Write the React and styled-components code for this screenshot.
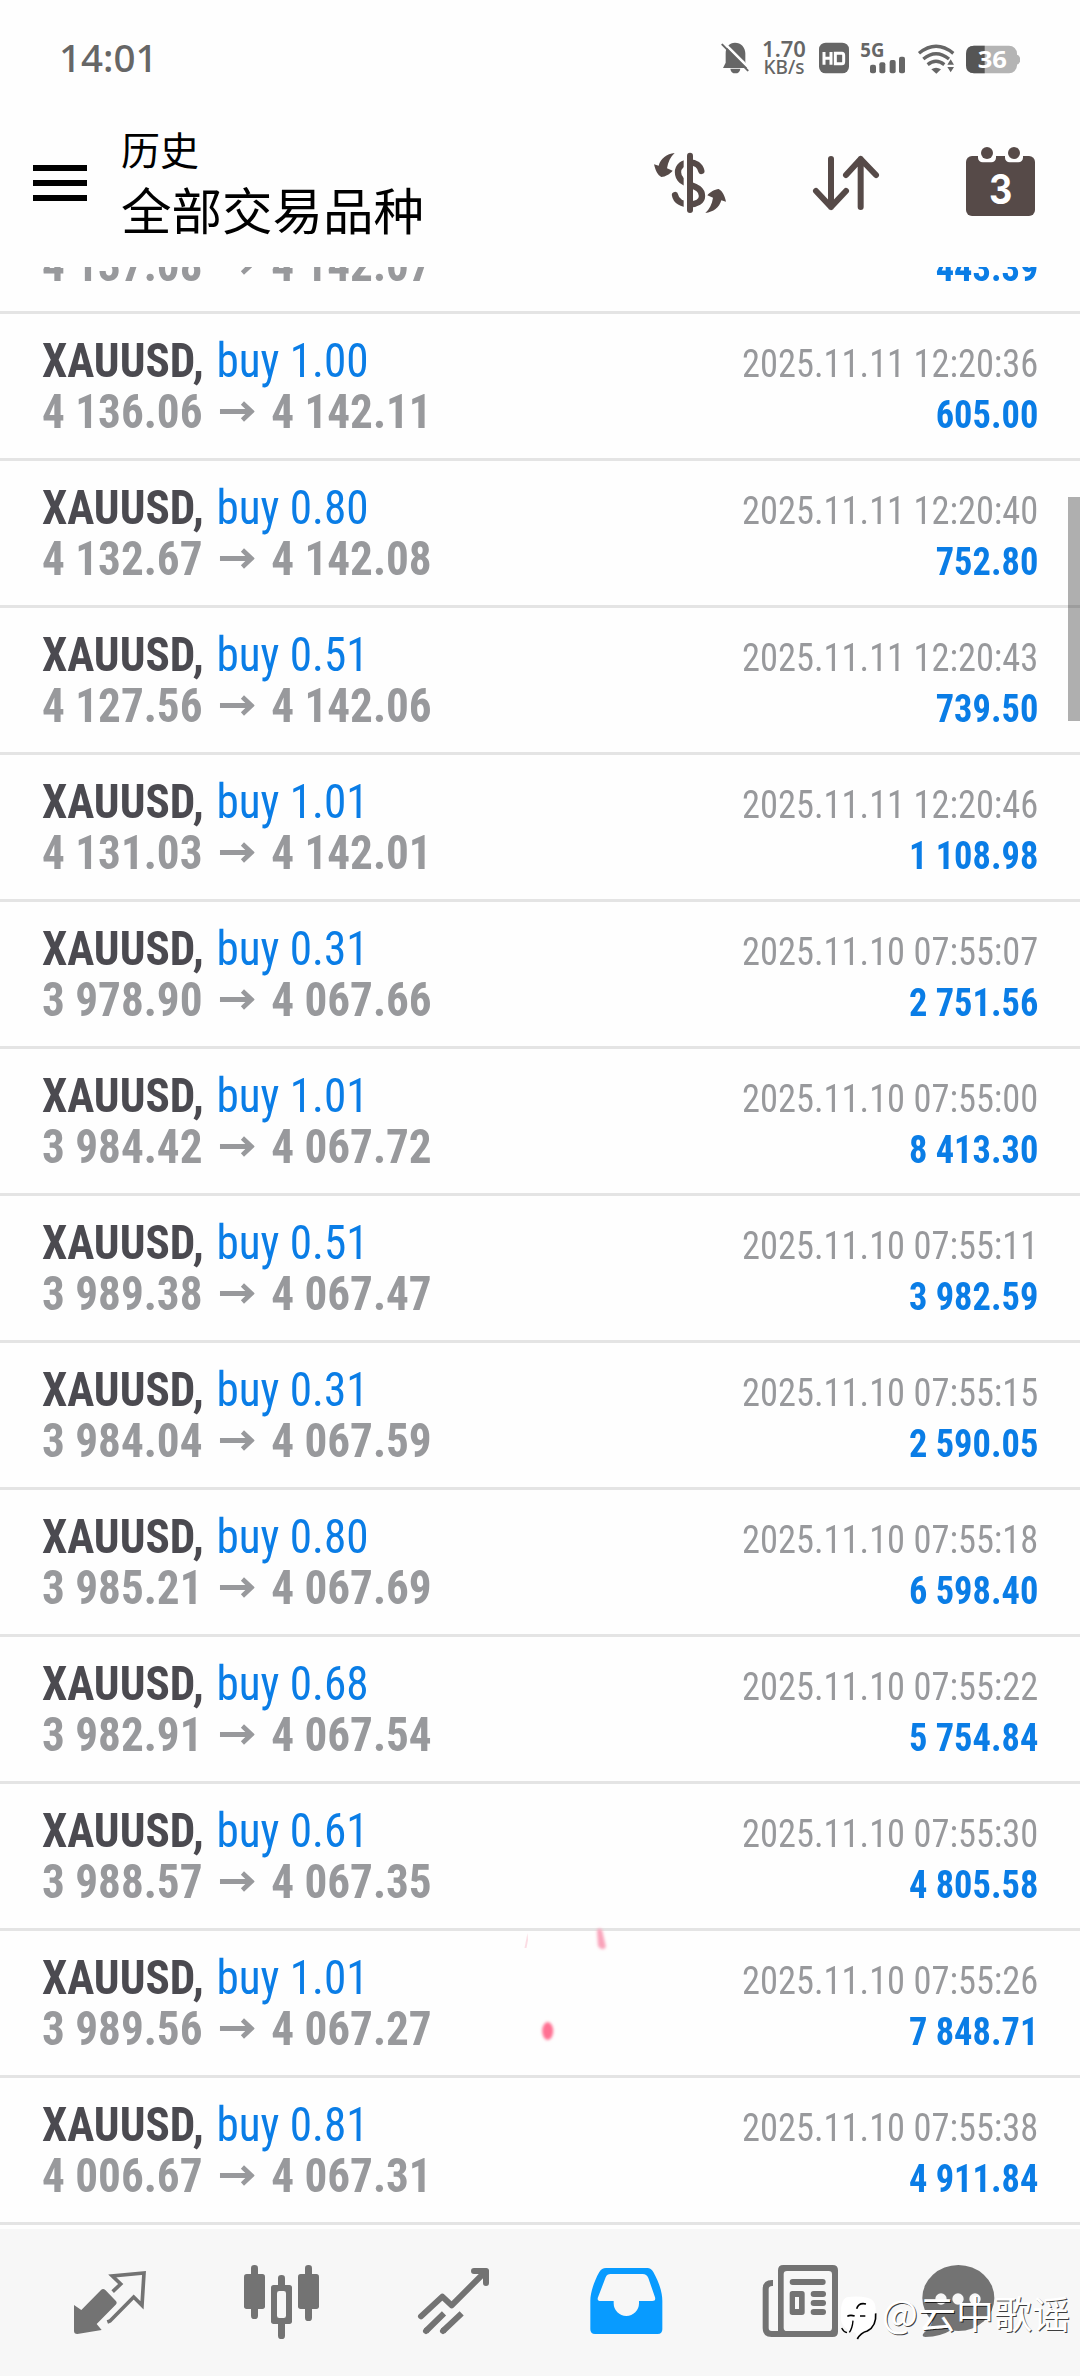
import React from 'react'
import styled, { createGlobalStyle } from 'styled-components'

const GlobalStyle = createGlobalStyle`
  * {
    box-sizing: border-box;
  }
  body {
    margin: 0;
    background: #fefefe;
  }
`

const Screen = styled.div`
  position: relative;
  display: flex;
  flex-direction: column;
  width: 1080px;
  height: 2376px;
  overflow: hidden;
  background: #fefefe;
  font-family: 'Roboto Condensed', Roboto, 'Liberation Sans', sans-serif;
  font-stretch: 75%;
`

const StatusBar = styled.div`
  display: flex;
  align-items: center;
  justify-content: space-between;
  height: 116px;
  padding: 0 60px 0 59px;
  font-family: 'Noto Sans', sans-serif;
  font-stretch: normal;
  color: #666;
`

const Clock = styled.div`
  padding-bottom: 3px;
  font-size: 38.5px;
  font-weight: 500;
`

const StatusIcons = styled.div`
  display: flex;
  align-items: center;
`

const Speed = styled.div`
  width: 46px;
  margin: 0 12px 0 12px;
  font-size: 22px;
  font-weight: 600;
  line-height: 19px;
  text-align: center;
  white-space: nowrap;
`

const SpeedUnit = styled.div`
  font-size: 19px;
  font-weight: 500;
`

const Toolbar = styled.header`
  display: flex;
  align-items: flex-start;
  height: 151px;
  padding: 0 42px 0 33px;
`

const MenuButton = styled.button`
  display: flex;
  flex-direction: column;
  gap: 9px;
  width: 54px;
  margin: 49px 34px 0 0;
  padding: 0;
  border: 0;
  background: none;
`

const MenuLine = styled.span`
  height: 6px;
  background: #000;
`

const Titles = styled.div`
  flex: 1;
  padding-top: 4px;
  font-family: 'Noto Sans CJK SC', sans-serif;
  font-stretch: normal;
  color: #000;
`

const Title = styled.div`
  font-size: 39px;
  line-height: 56px;
`

const Subtitle = styled.div`
  font-size: 50.5px;
  line-height: 64px;
`

const Actions = styled.div`
  display: flex;
  gap: 84px;
  padding-top: 31px;
`

const ActionIcon = styled.svg`
  display: block;
  width: 72px;
  height: 72px;
`

const List = styled.main`
  flex: none;
  height: 1962px;
  overflow: hidden;
`

const Deals = styled.div`
  margin-top: -100px;
`

const Deal = styled.div`
  display: flex;
  justify-content: space-between;
  height: 147px;
  padding: 21px 42px 0;
  border-bottom: 3px solid #e4e4e4;
  white-space: nowrap;
`

const Position = styled.div`
  transform: scaleX(0.941);
  transform-origin: left;
`

const Result = styled.div`
  padding-top: 3px;
  transform: scaleX(0.922);
  transform-origin: right;
`

const Line = styled.div`
  display: flex;
  align-items: center;
  justify-content: ${props => (props.$end ? 'flex-end' : 'flex-start')};
  height: 51px;
`

const Symbol = styled.span`
  margin-right: 13.5px;
  font-size: 48px;
  font-weight: 700;
  color: #4b4a50;
`

const Volume = styled.span`
  font-size: 48px;
  color: #0a7de6;
`

const Price = styled.span`
  font-size: 48px;
  font-weight: 700;
  color: #98999c;
`

const Arrow = styled.svg`
  width: 37px;
  height: 21px;
  margin: 0 18px;
`

const Time = styled.span`
  font-size: 39.5px;
  color: #98999c;
`

const Profit = styled.span`
  font-size: 39.5px;
  font-weight: 700;
  color: #0a7de6;
`

const Nav = styled.nav`
  display: grid;
  grid-template-columns: repeat(6, 172px);
  justify-items: center;
  flex: 1;
  padding: 23px 24px 0;
  background: #f7f7f7;
`

const NavIcon = styled.svg`
  display: block;
  width: 96px;
  height: 96px;
`

const ScrollThumb = styled.div`
  position: absolute;
  top: 497px;
  right: 0;
  width: 12px;
  height: 224px;
  background: rgba(0, 0, 0, 0.31);
`

const Sparks = styled.svg`
  position: absolute;
  top: 1920px;
  left: 510px;
  width: 110px;
  height: 130px;
`

const Watermark = styled.div`
  position: absolute;
  top: 2292px;
  left: 838px;
  display: flex;
  align-items: flex-start;
  font-family: 'Noto Sans CJK SC', sans-serif;
  font-size: 38px;
  line-height: 39px;
  color: #fff;
  text-shadow: 1px 1px 0 rgba(0, 0, 0, 0.75);
  white-space: nowrap;
`

const WatermarkLogo = styled.svg`
  width: 42px;
  height: 48px;
  margin-right: 2px;
`

const deals = [
  { volume: '1.01', open: '4 137.08', close: '4 142.07', time: '2025.11.11 12:20:33', profit: '443.39' },
  { volume: '1.00', open: '4 136.06', close: '4 142.11', time: '2025.11.11 12:20:36', profit: '605.00' },
  { volume: '0.80', open: '4 132.67', close: '4 142.08', time: '2025.11.11 12:20:40', profit: '752.80' },
  { volume: '0.51', open: '4 127.56', close: '4 142.06', time: '2025.11.11 12:20:43', profit: '739.50' },
  { volume: '1.01', open: '4 131.03', close: '4 142.01', time: '2025.11.11 12:20:46', profit: '1 108.98' },
  { volume: '0.31', open: '3 978.90', close: '4 067.66', time: '2025.11.10 07:55:07', profit: '2 751.56' },
  { volume: '1.01', open: '3 984.42', close: '4 067.72', time: '2025.11.10 07:55:00', profit: '8 413.30' },
  { volume: '0.51', open: '3 989.38', close: '4 067.47', time: '2025.11.10 07:55:11', profit: '3 982.59' },
  { volume: '0.31', open: '3 984.04', close: '4 067.59', time: '2025.11.10 07:55:15', profit: '2 590.05' },
  { volume: '0.80', open: '3 985.21', close: '4 067.69', time: '2025.11.10 07:55:18', profit: '6 598.40' },
  { volume: '0.68', open: '3 982.91', close: '4 067.54', time: '2025.11.10 07:55:22', profit: '5 754.84' },
  { volume: '0.61', open: '3 988.57', close: '4 067.35', time: '2025.11.10 07:55:30', profit: '4 805.58' },
  { volume: '1.01', open: '3 989.56', close: '4 067.27', time: '2025.11.10 07:55:26', profit: '7 848.71' },
  { volume: '0.81', open: '4 006.67', close: '4 067.31', time: '2025.11.10 07:55:38', profit: '4 911.84' },
]

// HD badge, signal, wifi and battery share one coordinate grid, 3 units per pixel
const Status = () => (
  <StatusBar>
    <Clock>14:01</Clock>
    <StatusIcons>
      <svg width="28" height="32" viewBox="28 36 84 96" fill="#666">
        <path d="M70 38 C88 38 101 52 101 70 V96 L108 114 H34 L42 98 V70 C42 52 53 38 70 38z" />
        <path d="M56 116 H86 Q84 130 71 130 Q58 130 56 116z" />
        <path d="M36 38 L114 116" stroke="#fefefe" strokeWidth="8" />
        <path d="M32 44 L108 121" stroke="#666" strokeWidth="6" strokeLinecap="round" />
      </svg>
      <Speed>
        1.70
        <SpeedUnit>KB/s</SpeedUnit>
      </Speed>
      <svg width="201" height="34" viewBox="327 33 603 102" fill="#666">
        <rect x="327" y="38" width="90" height="92" rx="20" />
        <path d="M342 66 V104 M363 66 V104 M342 85 H363 M376 70 H396 Q401 70 401 76 V95 Q401 101 396 101 H376z" fill="none" stroke="#fff" strokeWidth="9" />
        <text x="451" y="82" fontSize="59" fontWeight="700" textLength="72" lengthAdjust="spacingAndGlyphs">5G</text>
        <rect x="480" y="104" width="18" height="26" rx="6" />
        <rect x="508" y="97" width="18" height="33" rx="6" />
        <rect x="539" y="90" width="18" height="40" rx="6" />
        <rect x="567" y="80" width="18" height="50" rx="6" />
        <g fill="none" stroke="#666" strokeWidth="10">
          <path d="M627 70 Q678 28 730 70" />
          <path d="M640 87 Q678 56 717 87" />
          <path d="M653 104 Q678 84 703 104" />
        </g>
        <path d="M664 118 Q678 109 693 118 L679 131z" />
        <path d="M722 84 L737 106 L722 132 L707 106z" fill="#fefefe" />
        <path d="M722 88 L732 104 H712z M712 111 H732 L722 127z" />
        <path d="M915 72 Q931 75 931 89 Q931 103 915 106z" fill="#b4b4b4" />
        <rect x="768" y="47" width="153" height="83" rx="24" fill="#b4b4b4" />
        <path d="M824 47 H792 Q768 47 768 71 V106 Q768 130 792 130 H824z" fill="#555" />
        <text x="803" y="113" fontSize="70" fontWeight="700" fill="#fff" textLength="88" lengthAdjust="spacingAndGlyphs">36</text>
      </svg>
    </StatusIcons>
  </StatusBar>
)

const swapArrow = 'M104 39 C80 42 62 55 56 77 L42 73 C46 90 52 105 64 111 C76 110 90 102 98 92 L81 85 C84 65 92 50 104 39z'

const Header = () => (
  <Toolbar>
    <MenuButton>
      <MenuLine />
      <MenuLine />
      <MenuLine />
    </MenuButton>
    <Titles>
      <Title>历史</Title>
      <Subtitle>全部交易品种</Subtitle>
    </Titles>
    <Actions>
      <ActionIcon viewBox="42 21 216 216" fill="#564a48">
        <path
          d="M184 93 C180 76 166 67 150 67 C128 67 114 80 114 97 C114 120 132 127 150 134 C170 141 186 148 186 168 C186 184 170 193 150 193 C125 193 108 183 105 165"
          fill="none"
          stroke="#564a48"
          strokeWidth="19"
          strokeLinecap="round"
        />
        <rect x="131" y="38" width="12" height="182" fill="#fefefe" />
        <rect x="141" y="38" width="18" height="181" rx="9" />
        <path d={swapArrow} />
        <path d={swapArrow} transform="rotate(180 150 129)" />
      </ActionIcon>
      <ActionIcon viewBox="510 21 216 216" fill="none" stroke="#564a48" strokeWidth="18" strokeLinecap="round" strokeLinejoin="round">
        <path d="M573 57 V201 M528 153 L573 201 L618 153" />
        <path d="M662 201 V57 M618 105 L662 57 L708 105" />
      </ActionIcon>
      <ActionIcon viewBox="978 21 216 216" fill="#564a48">
        <rect x="978" y="48" width="207" height="180" rx="18" />
        <rect x="1014" y="30" width="54" height="37" rx="14" fill="#fefefe" />
        <rect x="1095" y="30" width="54" height="37" rx="14" fill="#fefefe" />
        <circle cx="1041" cy="39" r="18" />
        <circle cx="1122" cy="39" r="18" />
        <text x="1082" y="191" fontFamily="Inter" fontSize="122" fontWeight="700" fill="#fff" textAnchor="middle" textLength="70" lengthAdjust="spacingAndGlyphs">3</text>
      </ActionIcon>
    </Actions>
  </Toolbar>
)

const DealRow = ({ deal }) => (
  <Deal>
    <Position>
      <Line>
        <Symbol>XAUUSD,</Symbol>
        <Volume>buy {deal.volume}</Volume>
      </Line>
      <Line>
        <Price>{deal.open}</Price>
        <Arrow viewBox="0 0 37 21" fill="none" stroke="#98999c" strokeWidth="5">
          <path d="M0 10.5 H33 M24 2 L33.5 10.5 L24 19" />
        </Arrow>
        <Price>{deal.close}</Price>
      </Line>
    </Position>
    <Result>
      <Line $end>
        <Time>{deal.time}</Time>
      </Line>
      <Line $end>
        <Profit>{deal.profit}</Profit>
      </Line>
    </Result>
  </Deal>
)

const BottomNav = () => (
  <Nav>
    <NavIcon viewBox="6 6 288 288" fill="#737373">
      <path d="M42 165 L64 180 L123 120 Q129 114 136 120 L167 152 Q173 158 167 164 L110 222 L125 240 L52 252 Q42 252 42 243z" />
      <path d="M158 125 L182 102 L157 78 L252 69 L246 166 L221 141 L150 213 L142 216" fill="none" stroke="#737373" strokeWidth="11" strokeLinecap="butt" />
    </NavIcon>
    <NavIcon viewBox="522 6 288 288" fill="#737373">
      <rect x="573" y="45" width="21" height="162" rx="10" />
      <rect x="552" y="72" width="63" height="105" rx="8" />
      <rect x="654" y="75" width="21" height="192" rx="10" />
      <rect x="633" y="105" width="63" height="117" rx="8" />
      <rect x="651" y="123" width="27" height="81" rx="7" fill="#f7f7f7" />
      <rect x="735" y="45" width="21" height="168" rx="10" />
      <rect x="714" y="72" width="63" height="105" rx="8" />
    </NavIcon>
    <NavIcon viewBox="1038 6 288 288" fill="none" stroke="#737373" strokeWidth="18" strokeLinecap="round" strokeLinejoin="round">
      <path d="M1083 199 L1147 140 L1175 166 L1277 64" />
      <path d="M1242 63 H1278 V99" />
      <path d="M1098 243 L1099 242 M1149 243 L1150 242" />
      <path d="M1098 243 L1152 190 M1149 243 L1205 190" strokeLinecap="butt" />
    </NavIcon>
    <NavIcon viewBox="-6 6 288 288" fill="#089bff">
      <path
        fillRule="evenodd"
        d="M78 54 H202 Q213 54 220 66 C238 98 247 128 247 152 V238 Q247 252 233 252 H45 Q31 252 31 238 V152 C31 128 42 94 58 66 Q65 54 78 54z M92 72 Q81 72 77 82 L54 142 Q50 153 62 153 H101 V160 A38 38 0 0 0 177 160 V153 H217 Q228 153 225 142 L205 84 Q200 72 188 72z"
      />
    </NavIcon>
    <NavIcon viewBox="510 6 288 288" fill="#737373">
      <path d="M579 99 H576 Q557 99 557 118 V234 Q557 252 575 252 H604" fill="none" stroke="#737373" strokeWidth="18" />
      <path fillRule="evenodd" d="M610 45 H758 Q774 45 774 61 V245 Q774 261 758 261 H594 V61 Q594 45 610 45z M621 63 Q611 63 611 73 V233 Q611 243 621 243 H746 Q756 243 756 233 V73 Q756 63 746 63z" />
      <rect x="629" y="87" width="108" height="18" rx="9" />
      <path fillRule="evenodd" d="M637 123 H666 Q674 123 674 131 V187 Q674 195 666 195 H637 Q629 195 629 187 V131 Q629 123 637 123z M645 141 V177 H657 V141z" />
      <rect x="692" y="123" width="46" height="18" rx="9" />
      <rect x="692" y="150" width="46" height="18" rx="9" />
      <rect x="692" y="177" width="46" height="18" rx="9" />
    </NavIcon>
    <NavIcon viewBox="1026 6 288 288" fill="#737373">
      <ellipse cx="1135" cy="144" rx="108" ry="99" />
      <path d="M1060 205 Q1054 232 1032 248 Q1022 260 1036 261 Q1082 260 1114 240z" />
      <circle cx="1083" cy="147" r="17" fill="#f7f7f7" />
      <circle cx="1134" cy="147" r="17" fill="#f7f7f7" />
      <circle cx="1185" cy="147" r="17" fill="#f7f7f7" />
    </NavIcon>
  </Nav>
)

const App = () => (
  <Screen>
    <GlobalStyle />
    <Status />
    <Header />
    <List>
      <Deals>
        {deals.map(deal => (
          <DealRow key={deal.time} deal={deal} />
        ))}
      </Deals>
    </List>
    <BottomNav />
    <ScrollThumb />
    <Sparks viewBox="510 1920 110 130">
      <defs>
        <filter id="soft" x="-50%" y="-50%" width="200%" height="200%">
          <feGaussianBlur stdDeviation="1.6" />
        </filter>
      </defs>
      <g filter="url(#soft)">
        <ellipse cx="547.7" cy="2031" rx="5.5" ry="9" fill="#ff6f92" />
        <path d="M597 1930 Q600 1927 602 1930 L606 1947 Q602 1952 598 1946z" fill="#f9a3ba" />
      </g>
      <path d="M527.5 1933 L528 1940 L526.5 1948 H524.5z" fill="#fbdde4" />
    </Sparks>
    <Watermark>
      <WatermarkLogo viewBox="774 126 126 144">
        <path d="M800 142 Q830 136 862 143 Q887 148 887 175 V205 Q885 238 845 250 L832 267 L826 248 Q783 238 783 205 Q780 150 800 142z" fill="#fff" />
        <g fill="none" stroke="#000" strokeWidth="5">
          <path d="M858 162 Q836 157 830 176" />
          <path d="M802 199 Q810 194 824 198 M840 198 L856 198" />
          <path d="M819 212 Q817 236 808 247 M785 234 Q791 246 801 248" strokeWidth="4" />
          <path d="M887 190 Q890 228 862 243 Q842 248 832 267" />
        </g>
      </WatermarkLogo>
      @云中歌谣
    </Watermark>
  </Screen>
)

export default App
